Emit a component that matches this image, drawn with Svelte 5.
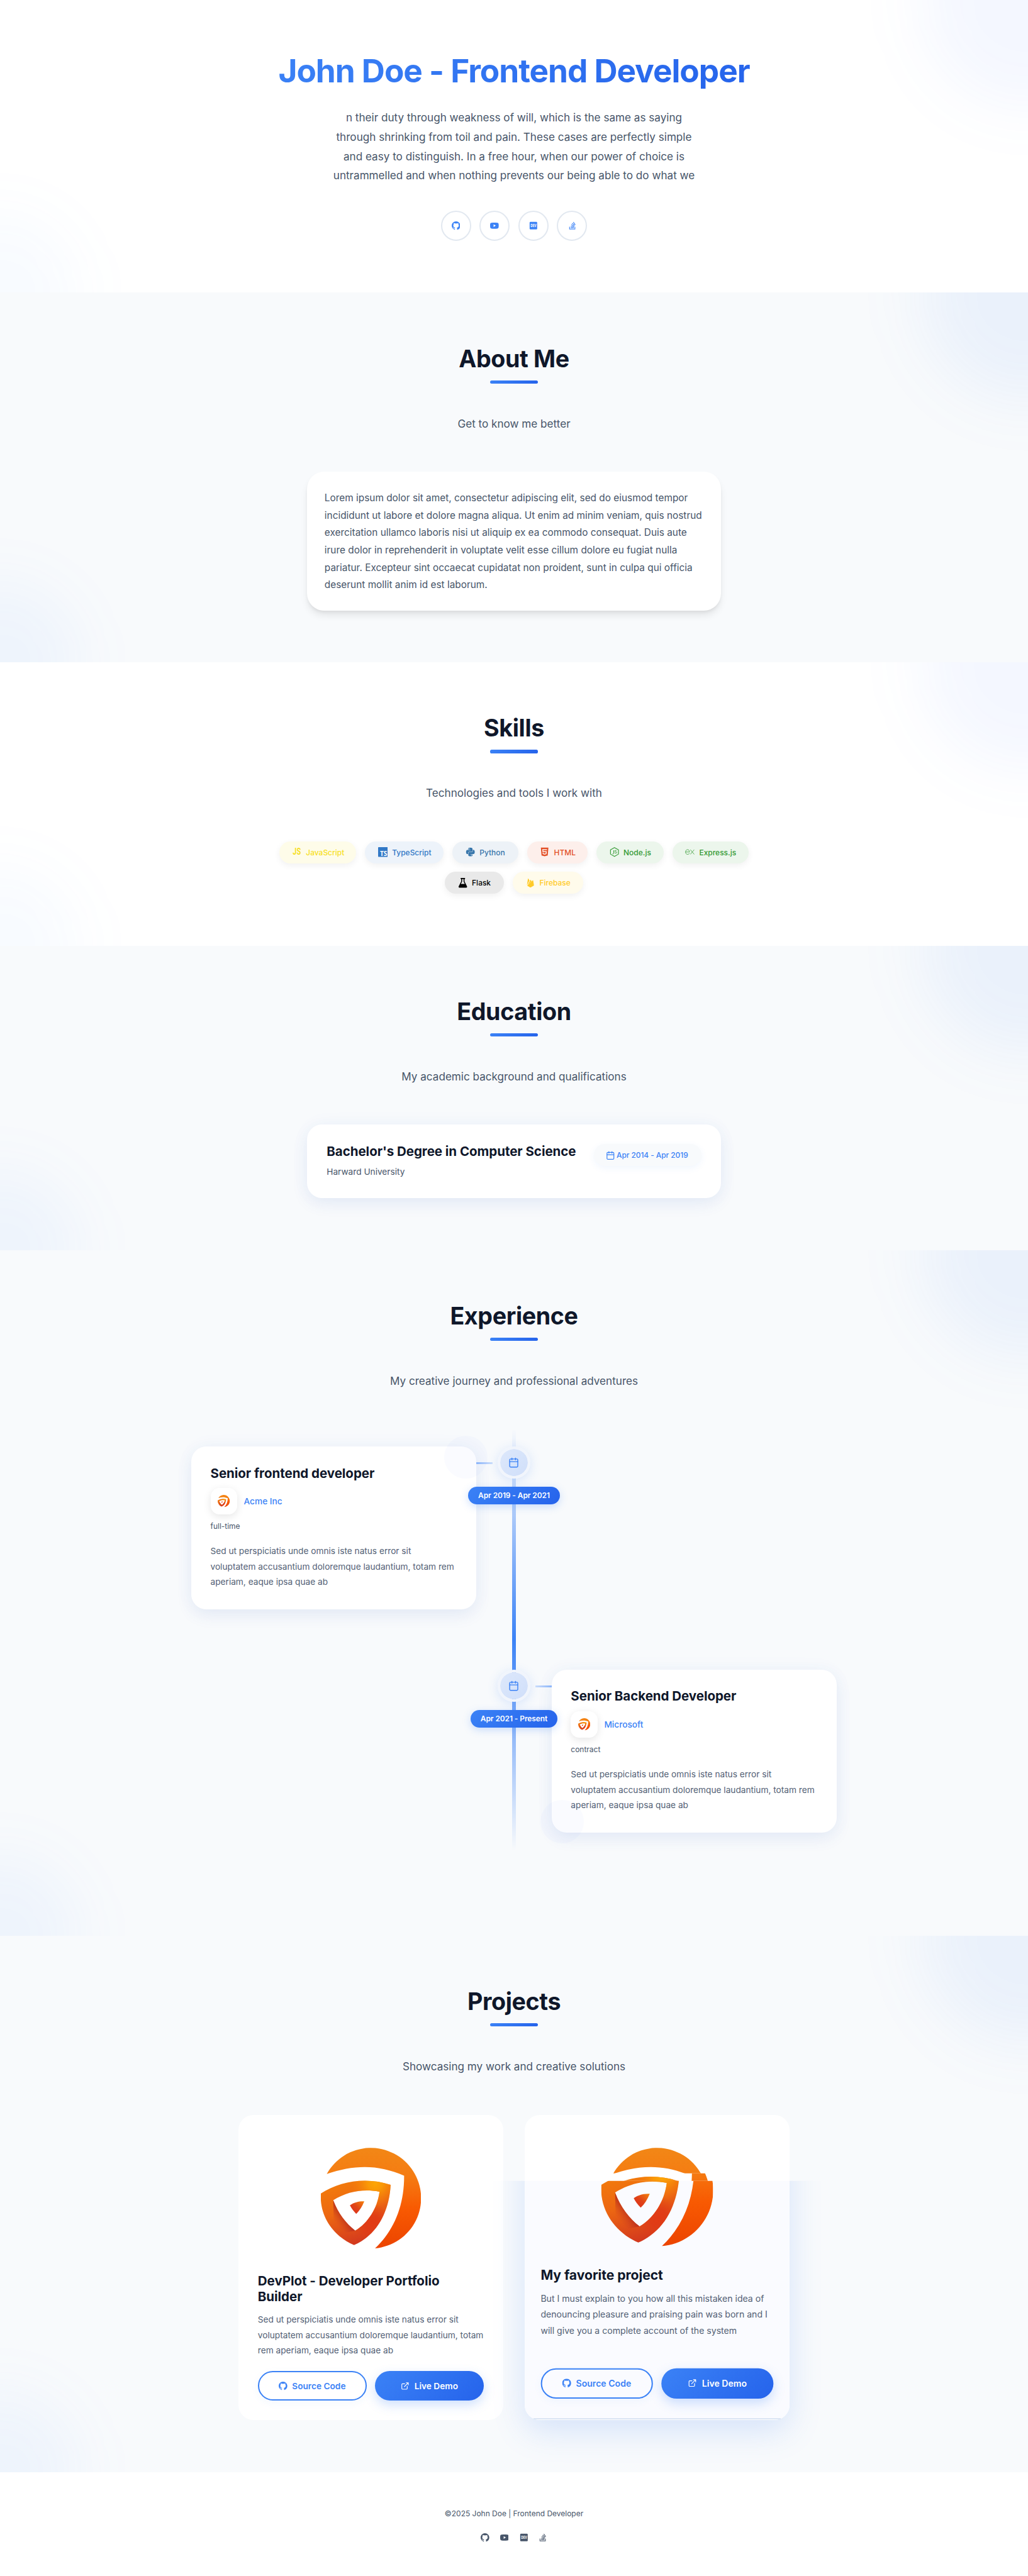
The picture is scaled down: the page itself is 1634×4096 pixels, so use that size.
<script>
  const skills = [
    { name: 'JavaScript', icon: 'js', fg: '#f7df1e', bg: '#fefce9', w: 143.6 },
    { name: 'TypeScript', icon: 'ts', fg: '#3178c6', bg: '#edf3fa', w: 146 },
    { name: 'Python', icon: 'python', fg: '#3776ab', bg: '#edf2f7', w: 121.8 },
    { name: 'HTML', icon: 'html', fg: '#e34f26', bg: '#fdefeb', w: 112.7 },
    { name: 'Node.js', icon: 'node', fg: '#339933', bg: '#ecf6ec', w: 124.2 },
    { name: 'Express.js', icon: 'express', fg: '#339933', bg: '#ecf6ec', w: 142.4 },
    { name: 'Flask', icon: 'flask', fg: '#000000', bg: '#e9e9e9', w: 109 },
    { name: 'Firebase', icon: 'firebase', fg: '#ffca28', bg: '#fffbeb', w: 131 }
  ];
  const socials = ['github', 'youtube', 'dev', 'stack'];
  const jobs = [
    { title: 'Senior frontend developer', company: 'Acme Inc', type: 'full-time', dates: 'Apr 2019 - Apr 2021', side: 'left' },
    { title: 'Senior Backend Developer', company: 'Microsoft', type: 'contract', dates: 'Apr 2021 - Present', side: 'right' }
  ];
  const jobText = 'Sed ut perspiciatis unde omnis iste natus error sit voluptatem accusantium doloremque laudantium, totam rem aperiam, eaque ipsa quae ab';
</script>

{#snippet icon(name, size)}
  {#if name === 'github'}
    <svg width={size} height={size} viewBox="0 0 16 16" fill="currentColor"><path d="M8 0C3.58 0 0 3.58 0 8c0 3.54 2.29 6.53 5.47 7.59.4.07.55-.17.55-.38 0-.19-.01-.82-.01-1.49-2.01.37-2.53-.49-2.69-.94-.09-.23-.48-.94-.82-1.13-.28-.15-.68-.52-.01-.53.63-.01 1.08.58 1.23.82.72 1.21 1.87.87 2.33.66.07-.52.28-.87.51-1.07-1.78-.2-3.64-.89-3.64-3.95 0-.87.31-1.59.82-2.15-.08-.2-.36-1.02.08-2.12 0 0 .67-.21 2.2.82.64-.18 1.32-.27 2-.27s1.36.09 2 .27c1.53-1.04 2.2-.82 2.2-.82.44 1.1.16 1.92.08 2.12.51.56.82 1.27.82 2.15 0 3.07-1.87 3.75-3.65 3.95.29.25.54.73.54 1.48 0 1.07-.01 1.93-.01 2.2 0 .21.15.46.55.38A8.01 8.01 0 0 0 16 8c0-4.42-3.58-8-8-8z" /></svg>
  {:else if name === 'youtube'}
    <svg width={size} height={size} viewBox="0 0 16 16" fill="currentColor" fill-rule="evenodd"><path d="M2.2 2.7C4.5 2.3 11.5 2.3 13.8 2.7c1 .2 1.7.9 1.9 1.8.4 1.8.4 5.2 0 7-.2.9-.9 1.6-1.9 1.8-2.3.4-9.3.4-11.6 0-1-.2-1.7-.9-1.9-1.8-.4-1.8-.4-5.2 0-7 .2-.9.9-1.6 1.9-1.8zM6.5 5.6v4.8L10.6 8z" /></svg>
  {:else if name === 'dev'}
    <svg width={size} height={size} viewBox="0 0 16 16"><rect x="1" y="1" width="14" height="14" rx="1.6" fill="currentColor" /><text class="dev-label" x="8" y="10.6" textLength="10.8" lengthAdjust="spacingAndGlyphs" text-anchor="middle">DEV</text></svg>
  {:else if name === 'stack'}
    <svg width={size} height={size} viewBox="-64 0 512 512" fill="currentColor"><path d="M290.7 311L95 269.7 86.8 309l195.7 41zm51-87L188.2 95.7l-25.5 30.8 153.5 128.3zm-31.2 39.7L129.2 179l-16.7 36.5L293.7 300zM262 32l-32 24 119.3 160.3 32-24zm20.5 328h-200v39.7h200zm39.7 80H42.7V320h-40v160h359.5V320h-40z" /></svg>
  {:else if name === 'calendar'}
    <svg width={size} height={size} viewBox="0 0 24 24" fill="none" stroke="currentColor" stroke-width="2" stroke-linecap="round" stroke-linejoin="round"><rect x="3" y="4" width="18" height="18" rx="2" /><path d="M16 2v4M8 2v4M3 10h18" /></svg>
  {:else if name === 'external'}
    <svg width={size} height={size} viewBox="0 0 24 24" fill="none" stroke="currentColor" stroke-width="2" stroke-linecap="round" stroke-linejoin="round"><path d="M18 13v6a2 2 0 0 1-2 2H5a2 2 0 0 1-2-2V8a2 2 0 0 1 2-2h6M15 3h6v6M10 14L21 3" /></svg>
  {:else if name === 'js'}
    <svg class="open" width={size} height={size} viewBox="0 0 18 18"><text class="js-label" x="1.5" y="14" textLength="15" lengthAdjust="spacingAndGlyphs">JS</text></svg>
  {:else if name === 'ts'}
    <svg width={size} height={size} viewBox="0 0 18 18"><rect width="18" height="18" rx="1" fill="currentColor" /><text class="ts-label" x="3.4" y="16.2" textLength="13.6" lengthAdjust="spacingAndGlyphs">TS</text></svg>
  {:else if name === 'python'}
    <svg width={size} height={size} viewBox="-1.5 -1.5 27 27" fill="currentColor"><path d="M14.25.18l.9.2.73.26.59.3.45.32.34.34.25.34.16.33.1.3.04.26.02.2-.01.13V8.5l-.05.63-.13.55-.21.46-.26.38-.3.31-.33.25-.35.19-.35.14-.33.1-.3.07-.26.04-.21.02H8.77l-.69.05-.59.14-.5.22-.41.27-.33.32-.27.35-.2.36-.15.37-.1.35-.07.32-.04.27-.02.21v3.06H3.17l-.21-.03-.28-.07-.32-.12-.35-.18-.36-.26-.36-.36-.35-.46-.32-.59-.28-.73-.21-.88-.14-1.05-.05-1.23.06-1.22.16-1.04.24-.87.32-.71.36-.57.4-.44.42-.33.42-.24.4-.16.36-.1.32-.05.24-.01h.16l.06.01h8.16v-.83H6.18l-.01-2.75-.02-.37.05-.34.11-.31.17-.28.25-.26.31-.23.38-.2.44-.18.51-.15.58-.12.64-.1.71-.06.77-.04.84-.02 1.27.05zm-6.3 1.98l-.23.33-.08.41.08.41.23.34.33.22.41.09.41-.09.33-.22.23-.34.08-.41-.08-.41-.23-.33-.33-.22-.41-.09-.41.09zm13.09 3.95l.28.06.32.12.35.18.36.27.36.35.35.47.32.59.28.73.21.88.14 1.04.05 1.23-.06 1.23-.16 1.04-.24.86-.32.71-.36.57-.4.45-.42.33-.42.24-.4.16-.36.09-.32.05-.24.02-.16-.01h-8.22v.82h5.84l.01 2.76.02.36-.05.34-.11.31-.17.29-.25.25-.31.24-.38.2-.44.17-.51.15-.58.13-.64.09-.71.07-.77.04-.84.01-1.27-.04-1.07-.14-.9-.2-.73-.25-.59-.3-.45-.33-.34-.34-.25-.34-.16-.33-.1-.3-.04-.25-.02-.2.01-.13v-5.34l.05-.64.13-.54.21-.46.26-.38.3-.32.33-.24.35-.2.35-.14.33-.1.3-.06.26-.04.21-.02.13-.01h5.84l.69-.05.59-.14.5-.21.41-.28.33-.32.27-.35.2-.36.15-.36.1-.35.07-.32.04-.28.02-.21V6.07h2.09l.14.01zm-6.47 14.25l-.23.33-.08.41.08.41.23.33.33.23.41.08.41-.08.33-.23.23-.33.08-.41-.08-.41-.23-.33-.33-.23-.41-.08-.41.08z" /></svg>
  {:else if name === 'html'}
    <svg width={size} height={size} viewBox="-1.5 -1.5 27 27" fill="currentColor"><path d="M1.5 0h21l-1.91 21.563L11.977 24l-8.564-2.438L1.5 0zm7.031 9.75l-.232-2.718 10.059.003.23-2.622L5.412 4.41l.698 8.01h9.126l-.326 3.426-2.91.804-2.955-.81-.188-2.11H6.248l.33 4.171L12 19.351l5.379-1.443.744-8.157H8.531z" /></svg>
  {:else if name === 'node'}
    <svg width={size} height={size} viewBox="0 0 18 18"><path d="M9 .8l7.4 4.2v8L9 17.2 1.6 13V5z" fill="none" stroke="currentColor" stroke-width="1.3" stroke-linejoin="round" /><path d="M7.6 5.8v5.6c0 1.2-.7 1.6-2.2.9M13 6.8c-.5-.9-3.4-1.2-3.5.4-.1 1.9 3.7.8 3.7 2.8 0 1.8-3.7 1.7-4.100 0" fill="none" stroke="currentColor" stroke-width="1.1" /></svg>
  {:else if name === 'express'}
    <svg width={size} height={size} viewBox="0 0 18 18"><path d="M.9 9h7.2c0-3-1.5-4.3-3.5-4.3S.8 6.2.8 9c0 2.900 1.6 4.4 3.7 4.4 1.8 0 3-.8 3.5-2.4M9.7 4.7l7.2 8.7M16.900 4.7l-7.2 8.7" fill="none" stroke="currentColor" stroke-width=".9" /></svg>
  {:else if name === 'flask'}
    <svg width={size} height={size} viewBox="0 0 18 18" fill="currentColor" fill-rule="evenodd"><path d="M4.9 0h8.2v2.1h-1v4.3l4.6 9c.6 1.3 0 2.6-1.5 2.6H2.8c-1.5 0-2.1-1.3-1.5-2.6l4.6-9V2.1h-1zM7.7 2.1v4.7L5.4 11.2h7.2l-2.3-4.4V2.1z" /></svg>
  {:else if name === 'firebase'}
    <svg width={size} height={size} viewBox="0 0 18 18" fill="currentColor"><path d="M3 13.2L4.9 1.5c.1-.5.7-.6.9-.1l2 3.7zM3.2 14L10.2 3.6 11.6 6zM3.5 14.3L13.8 4.5c.3-.3.7-.1.8.2l1.5 9.4-6 3.3c-.4.2-.8.2-1.2 0zM8.2 5.8l1-1.8c.2-.4.6-.4.8 0l.4.7z" /></svg>
  {/if}
{/snippet}

{#snippet logo(cls)}
  <svg class={cls} viewBox="0 0 186 187">
    <defs>
      <linearGradient id="cres" x1="0" y1="0" x2="0" y2="1">
        <stop offset="0" stop-color="#f28716" /><stop offset=".28" stop-color="#f57c12" /><stop offset=".6" stop-color="#f85a02" /><stop offset="1" stop-color="#ec4400" />
      </linearGradient>
      <linearGradient id="shield" gradientUnits="userSpaceOnUse" x1="40" y1="65" x2="75" y2="178">
        <stop offset="0" stop-color="#f27a0c" /><stop offset=".45" stop-color="#ec6612" /><stop offset="1" stop-color="#d2371e" />
      </linearGradient>
      <radialGradient id="amber" gradientUnits="userSpaceOnUse" cx="101" cy="66" r="46">
        <stop offset="0" stop-color="#fda606" /><stop offset=".3" stop-color="#fb9d06" stop-opacity=".9" /><stop offset="1" stop-color="#f67c0c" stop-opacity="0" />
      </radialGradient>
      <radialGradient id="red" gradientUnits="userSpaceOnUse" cx="95" cy="140" r="36">
        <stop offset="0" stop-color="#e23a14" /><stop offset=".4" stop-color="#e03a16" stop-opacity=".85" /><stop offset="1" stop-color="#e23a14" stop-opacity="0" />
      </radialGradient>
      <linearGradient id="shade" gradientUnits="userSpaceOnUse" x1="47" y1="128" x2="28" y2="143">
        <stop offset="0" stop-color="#a81f20" stop-opacity=".85" /><stop offset="1" stop-color="#d8481c" stop-opacity="0" />
      </linearGradient>
      <linearGradient id="core" x1="0" y1="1" x2="1" y2="0">
        <stop offset="0" stop-color="#dc2c1a" /><stop offset=".5" stop-color="#e04418" /><stop offset="1" stop-color="#f4820c" />
      </linearGradient>
    </defs>
    <path fill="url(#cres)" d="M11 48.8A93.4 93.5 0 1 1 100.7 187C137 153 155 106 154.7 52.1C108 31 62 31 11 48.8Z" />
    {#each ['shield', 'amber', 'red'] as g}
      <path fill="url(#{g})" fill-rule="evenodd" d="M0 85C35 62 85 54 129.7 69.1C127 121 103 163 61.7 181C24 165-3 128 0 85ZM23 97.6C50 81 78 76 109 81.7C105 112 88 140 63.7 154C47 141 32 122 23 97.6Z" />
    {/each}
    <path fill="url(#shade)" d="M23 97.6C32 122 47 141 63.7 154L46 158L24 142Z" />
    <path fill="url(#core)" d="M54 107C63 101 72 99.3 80.7 99.8C77 109 72 117 65.7 122.9C61 118 57 113 54 107Z" />
  </svg>
{/snippet}

{#snippet head(title, sub)}
  <header class="head">
    <h2>{title}</h2>
    <span class="bar"></span>
    <p>{sub}</p>
  </header>
{/snippet}

{#snippet buttons()}
  <div class="buttons">
    <a class="btn outline">{@render icon('github', 16)}Source Code</a>
    <a class="btn solid">{@render icon('external', 16)}Live Demo</a>
  </div>
{/snippet}

<div class="page">
  <section class="hero plain">
    <h1>John Doe - Frontend Developer</h1>
    <p class="intro">n their duty through weakness of will, which is the same as saying<br />through shrinking from toil and pain. These cases are perfectly simple<br />and easy to distinguish. In a free hour, when our power of choice is<br />untrammelled and when nothing prevents our being able to do what we</p>
    <div class="socials">
      {#each socials as s}<a class="social">{@render icon(s, 16)}</a>{/each}
    </div>
  </section>

  <section class="alt about">
    {@render head('About Me', 'Get to know me better')}
    <div class="about-card">Lorem ipsum dolor sit amet, consectetur adipiscing elit, sed do eiusmod tempor incididunt ut labore et dolore magna aliqua. Ut enim ad minim veniam, quis nostrud exercitation ullamco laboris nisi ut aliquip ex ea commodo consequat. Duis aute irure dolor in reprehenderit in voluptate velit esse cillum dolore eu fugiat nulla pariatur. Excepteur sint occaecat cupidatat non proident, sunt in culpa qui officia deserunt mollit anim id est laborum.</div>
  </section>

  <section class="skills plain">
    {@render head('Skills', 'Technologies and tools I work with')}
    <div class="chips">
      {#each skills as s}
        <span class="chip" style="--fg:{s.fg};--bg:{s.bg};width:{s.w}px">{@render icon(s.icon, 18)}{s.name}</span>
      {/each}
    </div>
  </section>

  <section class="alt education">
    {@render head('Education', 'My academic background and qualifications')}
    <div class="edu-card">
      <div>
        <h3>Bachelor's Degree in Computer Science</h3>
        <p>Harward University</p>
      </div>
      <span class="edu-date">{@render icon('calendar', 17)}Apr 2014 - Apr 2019</span>
    </div>
  </section>

  <section class="alt experience">
    {@render head('Experience', 'My creative journey and professional adventures')}
    <div class="timeline">
      {#each jobs as job}
        <div class="item {job.side}">
          <article class="job">
            <h3>{job.title}</h3>
            <div class="company"><span class="badge">{@render logo('mini')}</span>{job.company}</div>
            <p class="type">{job.type}</p>
            <p class="desc">{jobText}</p>
          </article>
          <div class="marker">
            <span class="node">{@render icon('calendar', 20)}</span>
            <span class="pill">{job.dates}</span>
          </div>
        </div>
      {/each}
    </div>
  </section>

  <section class="alt projects">
    {@render head('Projects', 'Showcasing my work and creative solutions')}
    <div class="cards">
      <article class="card">
        <div class="art">{@render logo('mark')}</div>
        <h3>DevPlot - Developer Portfolio Builder</h3>
        <p class="desc">Sed ut perspiciatis unde omnis iste natus error sit voluptatem accusantium doloremque laudantium, totam rem aperiam, eaque ipsa quae ab</p>
        {@render buttons()}
      </article>
      <div class="lifted">
        <div class="glow"></div>
        <div class="tint"></div>
        <div class="layer top">{@render logo('mark')}</div>
        <div class="layer mid">{@render logo('mark')}</div>
        <div class="layer low">{@render logo('mark')}</div>
        <article class="card clear">
          <div class="art"></div>
          <h3>My favorite project</h3>
          <p class="desc">But I must explain to you how all this mistaken idea of denouncing pleasure and praising pain was born and I will give you a complete account of the system</p>
          {@render buttons()}
        </article>
      </div>
    </div>
  </section>

  <footer>
    <p>©2025 John Doe | Frontend Developer</p>
    <div class="foot-icons">{#each socials as s}{@render icon(s, 16)}{/each}</div>
  </footer>
</div>

<style>
  :global(body) { background: #fff; }
  .page { zoom: 0.8555; width: 1910px; height: 4788px; overflow: hidden; font-family: Inter, sans-serif; color: #475569; background: #fff; }
  h1, h2, h3, p { margin: 0; }
  svg { display: block; flex: none; }
  .open { overflow: visible; }
  section { position: relative; overflow: hidden; box-sizing: border-box; padding: 96px 0; display: flex; flex-direction: column; align-items: center; background: #fff; }
  section > :global(*) { position: relative; z-index: 1; }
  .alt { background: #f8fafc; }
  section::before, section::after { content: ''; position: absolute; border-radius: 50%; }
  section::before { width: 400px; height: 400px; top: -200px; right: -200px; background: rgba(59, 130, 246, .07); filter: blur(56px); }
  section::after { width: 300px; height: 300px; bottom: -150px; left: -150px; background: rgba(59, 130, 246, .05); filter: blur(52px); }
  .plain::before { background: rgba(59, 110, 246, .055); }
  .plain::after { background: rgba(59, 130, 246, .035); }
  .hero { height: 544px; }
  .about { height: 687px; }
  .skills { height: 527px; }
  .education { height: 565.7px; }
  .experience { height: 1274.3px; }
  .projects { height: 996.6px; }

  h1 { font-size: 60px; line-height: 72px; font-weight: 700; letter-spacing: -1.2px; background: linear-gradient(135deg, #3b82f6, #2563eb); -webkit-background-clip: text; background-clip: text; color: transparent; }
  .intro { margin-top: 33px; font-size: 20px; line-height: 36px; text-align: center; }
  .socials { display: flex; gap: 16px; margin-top: 47px; }
  .social { width: 56px; height: 56px; box-sizing: border-box; border: 2.4px solid #e2e8f0; border-radius: 50%; display: grid; place-items: center; color: #3b82f6; background: #fff; }
  .dev-label { font: 700 7.5px 'Open Sans', sans-serif; fill: #fff; }
  .js-label { font: 700 16.5px Roboto, sans-serif; fill: currentColor; }
  .ts-label { font: 700 11.5px 'Open Sans', sans-serif; fill: #fff; }

  .head { display: flex; flex-direction: column; align-items: center; height: 236.6px; }
  h2 { font-size: 44px; line-height: 52.8px; font-weight: 700; color: #0f172a; letter-spacing: -.44px; }
  .bar { width: 90px; height: 6px; margin-top: 14px; border-radius: 3px; background: linear-gradient(135deg, #3b82f6, #2563eb); }
  .head p { margin-top: 57px; font-size: 20px; line-height: 36px; }

  .about-card { width: 768px; height: 258.4px; box-sizing: border-box; padding: 32.6px 32px 0; border-radius: 32px; background: #fff; font-size: 18px; line-height: 32.4px; box-shadow: 0 10px 15px -3px rgba(0, 0, 0, .1), 0 4px 6px -2px rgba(0, 0, 0, .05); }

  .chips { width: 900px; display: flex; flex-wrap: wrap; justify-content: center; gap: 16px 16.5px; }
  .chip { box-sizing: border-box; height: 41px; padding-left: 24px; display: flex; align-items: center; gap: 8px; white-space: nowrap; border-radius: 20.5px; font-size: 14px; font-weight: 500; color: var(--fg); background: var(--bg); box-shadow: 0 4px 12px rgba(0, 0, 0, .06); }

  h3 { font-size: 24px; font-weight: 700; letter-spacing: -.05px; color: #0f172a; line-height: 27.5px; }
  .edu-card { width: 768px; height: 136.7px; box-sizing: border-box; padding: 36px; border-radius: 28px; background: #fff; display: flex; justify-content: space-between; align-items: flex-start; box-shadow: 0 10px 30px rgba(59, 90, 180, .09), 0 0 40px rgba(59, 130, 246, .03); }
  .edu-card p { margin-top: 11.5px; font-size: 16px; line-height: 25.6px; }
  .edu-date { box-sizing: border-box; width: 200px; height: 41px; padding-right: 2px; display: flex; align-items: center; justify-content: center; gap: 3px; font-size: 14px; font-weight: 500; letter-spacing: -.08px; color: #3b82f6; background: #f8fafc; border-radius: 20.5px; white-space: nowrap; box-shadow: 0 4px 12px rgba(59, 130, 246, .07); }

  .timeline { position: relative; box-sizing: border-box; width: 1200px; height: 783px; padding-top: 32px; display: flex; flex-direction: column; gap: 112px; }
  .timeline::before { content: ''; position: absolute; left: 597px; top: 0; width: 6px; height: 783px; background: linear-gradient(to bottom, rgba(59, 130, 246, 0), rgba(59, 130, 246, .4) 20%, #3b82f6 50%, rgba(59, 130, 246, .4) 80%, rgba(59, 130, 246, 0)); }
  .item { position: relative; display: grid; grid-template-columns: 530.4px minmax(0, 1fr) 530.4px; height: 302.8px; }
  .job { position: relative; grid-row: 1; grid-column: 1; box-sizing: border-box; padding: 36px; height: 302.8px; border-radius: 28px; background: #fff; box-shadow: 0 10px 30px rgba(59, 90, 180, .09), 0 0 40px rgba(59, 130, 246, .03); }
  .right .job { grid-column: 3; }
  .job::before { content: ''; position: absolute; width: 80px; height: 80px; border-radius: 50%; top: -20px; right: -20px; background: rgba(80, 130, 246, .03); }
  .right .job::before { top: auto; right: auto; bottom: -20px; left: -20px; }
  .job::after { content: ''; position: absolute; top: 30px; left: 100%; width: 30px; height: 3px; background: linear-gradient(to right, #8bb5fa, rgba(139, 181, 250, .4)); }
  .right .job::after { left: -30px; background: linear-gradient(to left, #8bb5fa, rgba(139, 181, 250, .4)); }
  .marker { grid-row: 1; grid-column: 2; position: relative; z-index: 2; display: flex; flex-direction: column; align-items: center; }
  .node { width: 60px; height: 60px; box-sizing: border-box; border: 5px solid #f1f5fc; border-radius: 50%; display: grid; place-items: center; color: #3b82f6; background: linear-gradient(135deg, #dde8fb, #d0dffa) padding-box; box-shadow: 0 4px 20px rgba(59, 130, 246, .18); }
  .pill { flex: none; box-sizing: border-box; height: 33px; margin-top: 15px; padding: 0 18.5px; border-radius: 16.5px; font-size: 14px; line-height: 33px; font-weight: 600; letter-spacing: -.1px; white-space: nowrap; color: #fff; background: linear-gradient(135deg, #3b82f6, #2563eb); box-shadow: 0 4px 15px rgba(59, 130, 246, .25); }
  .company { display: flex; align-items: center; gap: 12px; margin-top: 13.5px; font-size: 16px; font-weight: 500; color: #3b82f6; }
  .badge { width: 50px; height: 50px; border-radius: 16px; background: #fff; display: grid; place-items: center; box-shadow: 0 4px 15px rgba(0, 0, 0, .1); }
  :global(svg.mini) { width: 22.5px; height: 22.5px; }
  .type { margin-top: 9.7px; font-size: 14px; line-height: 22.4px; }
  .job .desc { margin-top: 21.4px; }
  .desc { font-size: 16px; line-height: 28.8px; color: #526074; }

  .cards { display: flex; gap: 40px; }
  .card { box-sizing: border-box; width: 492px; height: 567.6px; padding: 36px; border-radius: 28px; background: #fff; display: flex; flex-direction: column; }
  .art { height: 258.8px; box-sizing: border-box; padding: 24.8px 0 0 117.2px; }
  :global(svg.mark) { width: 186px; height: 187px; }
  .card h3 { line-height: 29px; }
  .card .desc { margin-top: 13.4px; }
  .buttons { margin-top: auto; display: grid; grid-template-columns: 1fr 1fr; gap: 16px; }
  .btn { box-sizing: border-box; height: 55px; border-radius: 27.5px; display: flex; align-items: center; justify-content: center; gap: 9px; font-size: 16px; font-weight: 600; white-space: nowrap; }
  .outline { border: 2.4px solid #3b82f6; color: #3b82f6; box-shadow: 0 4px 15px rgba(59, 130, 246, .06); }
  .solid { color: #fff; background: linear-gradient(135deg, #3b82f6, #2563eb); box-shadow: 0 8px 20px rgba(59, 130, 246, .25); }

  /* Hovered card: content is raised and enlarged, the tint starts below the top strip. */
  .lifted { position: relative; width: 492px; height: 567.6px; border-radius: 28px; background: #fff; }
  .glow { position: absolute; inset: 0; border-radius: 28px; box-shadow: 0 20px 60px rgba(59, 130, 246, .18); clip-path: inset(123px -120px -120px -120px); }
  .tint { position: absolute; inset: 0; border-radius: 28px; background: linear-gradient(#fafbff, #fafbff) 0 0 / 100% 564px no-repeat, #fff; clip-path: inset(123px 0 0 0); }
  .tint::after { content: ''; position: absolute; left: 16px; right: 16px; bottom: 1.5px; height: 2px; background: #dbe5f4; }
  .layer { position: absolute; inset: 0; display: flex; justify-content: center; padding-top: 60.8px; }
  .top { clip-path: inset(0 0 458.8px 0); }
  .mid { clip-path: inset(108.8px 0 444.6px 0); }
  .low { clip-path: inset(123px 0 0 0); }
  .mid :global(svg) { transform: translateY(-6px) scale(1.047); }
  .low :global(svg) { transform: translateY(-14.9px) scale(1.117); }
  .clear { background: none; transform: translateY(-12px) scale(1.03); }

  footer { padding-top: 65px; display: flex; flex-direction: column; align-items: center; }
  footer p { font-size: 14px; line-height: 25px; }
  .foot-icons { display: flex; gap: 20px; margin-top: 24px; }
</style>
